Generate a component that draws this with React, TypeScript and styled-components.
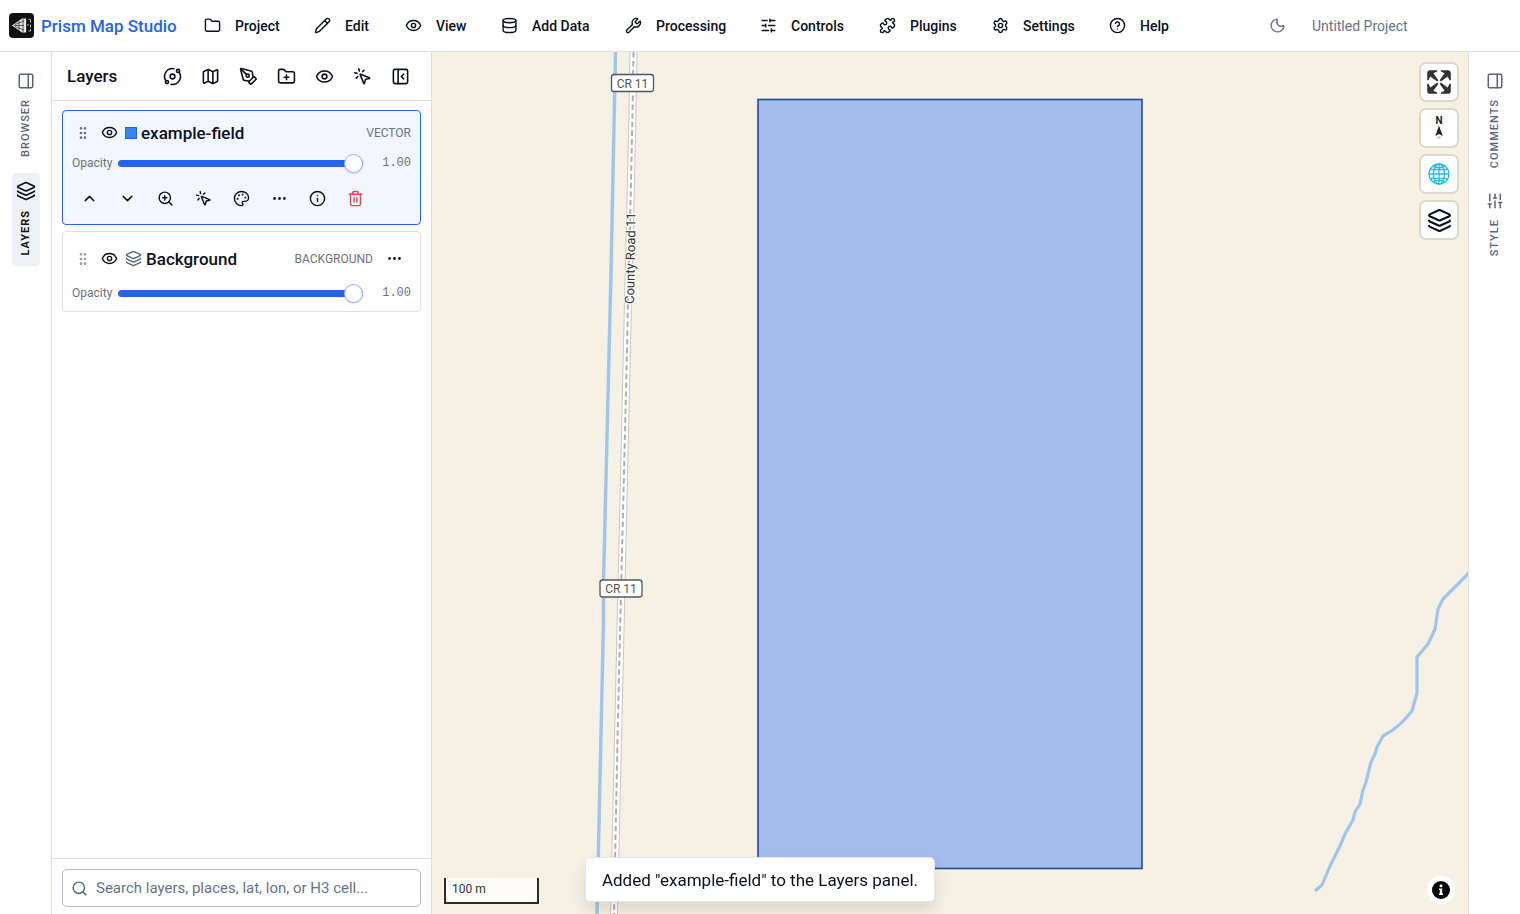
import React from 'react';
import styled, { createGlobalStyle, css } from 'styled-components';
import {
  Folder, Pencil, Eye, Database, Wrench, SlidersHorizontal, Puzzle, Settings, CircleHelp, Moon,
  Orbit, Map as MapIcon, PenTool, FolderPlus, MousePointerClick, PanelLeftClose, PanelRight,
  Layers, GripVertical, ChevronUp, ChevronDown, ZoomIn, Palette, Ellipsis, Info, Trash2, Search,
  type LucideIcon,
} from 'lucide-react';

const Global = createGlobalStyle`
  *, *::before, *::after { box-sizing: border-box; }
  html, body, #root { height: 100%; }
  body { margin: 0; background: #fff; color: #0b1020; font-family: Roboto, "Open Sans", sans-serif; }
  button, input { font: inherit; color: inherit; }
  button { border: 0; padding: 0; background: none; cursor: pointer; }
  svg { display: block; flex: none; }
`;

const Shell = styled.div`
  display: flex;
  flex-direction: column;
  height: 100vh;
  overflow: hidden;
`;

const Header = styled.header`
  display: flex;
  align-items: center;
  flex: none;
  height: 52px;
  padding-left: 9px;
  border-bottom: 1px solid #dcdfe5;
`;

const Brand = styled.a`
  display: flex;
  align-items: center;
  gap: 7px;
  width: 195px;
  color: #2563eb;
  font-size: 17px;
  font-weight: 500;
  line-height: 24px;
  text-decoration: none;
  white-space: nowrap;
`;

const Menu = styled.nav`
  display: grid;
  grid-template-columns: 110px 91px 96px 124px 135px 119px 113px 117px 101px;
`;

const MenuButton = styled.button`
  display: flex;
  align-items: center;
  gap: 14px;
  height: 32px;
  font-size: 14px;
  font-weight: 500;
  white-space: nowrap;
`;

const HeaderEnd = styled.div`
  display: flex;
  align-items: center;
  gap: 26px;
  margin-left: 59px;
  color: #697386;
  font-size: 14px;
  white-space: nowrap;
`;

const Body = styled.div`
  display: flex;
  flex: 1;
  min-height: 0;
`;

const Rail = styled.nav<{ $side: 'left' | 'right' }>`
  display: flex;
  flex-direction: column;
  align-items: center;
  gap: 8px;
  flex: none;
  width: 52px;
  padding-top: 12px;
  ${p => p.$side === 'left' ? css`border-right: 1px solid #dcdfe5;` : css`border-left: 1px solid #dcdfe5;`}
`;

const RailTab = styled.button<{ $active?: boolean; $height: number }>`
  display: flex;
  flex-direction: column;
  align-items: center;
  gap: 9px;
  width: 28px;
  height: ${p => p.$height}px;
  padding-top: 8px;
  border-radius: 4px;
  background: ${p => p.$active ? '#eff1f5' : 'transparent'};
  color: ${p => p.$active ? '#0b1020' : '#5b6478'};
  font-size: 11px;
  font-weight: ${p => p.$active ? 700 : 500};
  line-height: 16px;
  letter-spacing: 1px;
`;

const RailLabel = styled.span`
  writing-mode: vertical-rl;
  transform: rotate(180deg);
`;

const RotatedIcon = styled.span`
  transform: rotate(90deg);
`;

const Panel = styled.aside`
  display: flex;
  flex-direction: column;
  flex: none;
  width: 380px;
  border-right: 1px solid #dcdfe5;
`;

const PanelHeader = styled.div`
  display: flex;
  align-items: center;
  justify-content: space-between;
  height: 49px;
  padding: 0 12px 0 15px;
  border-bottom: 1px solid #dcdfe5;
`;

const PanelTitle = styled.h2`
  margin: 0;
  font-size: 17px;
  font-weight: 500;
  line-height: 24px;
`;

const IconRow = styled.div`
  display: flex;
`;

const IconButton = styled.button<{ $danger?: boolean }>`
  display: grid;
  place-items: center;
  width: 38px;
  height: 36px;
  color: ${p => p.$danger ? '#e5484d' : 'inherit'};
`;

const LayerTools = styled(IconRow)`
  margin-left: -2px;
`;

const LayerList = styled.ul`
  flex: 1;
  display: flex;
  flex-direction: column;
  gap: 6px;
  margin: 0;
  padding: 9px 10px;
  list-style: none;
`;

const LayerCard = styled.li<{ $selected?: boolean }>`
  display: flex;
  flex-direction: column;
  padding: ${p => p.$selected ? '8px 9px' : '9px 9px 1px'};
  border: 1px solid ${p => p.$selected ? '#2563eb' : '#dcdfe5'};
  border-radius: 4px;
  background: ${p => p.$selected ? '#f2f6fe' : '#fff'};
`;

const LayerHead = styled.div<{ $tall?: boolean }>`
  display: flex;
  align-items: center;
  height: ${p => p.$tall ? 35 : 27}px;
  padding-left: 3px;
`;

const Grip = styled.span<{ $dim?: boolean }>`
  display: flex;
  width: 26px;
  color: #6b7280;
  opacity: ${p => p.$dim ? 0.7 : 1};
`;

const EyeButton = styled.button`
  display: flex;
  width: 24px;
`;

const Swatch = styled.span`
  width: 12px;
  height: 12px;
  margin-right: 4px;
  border: 1px solid #2563eb;
  background: #3b82f6;
`;

const LayerGlyph = styled.span`
  margin-right: 4px;
  color: #5b6478;
`;

const LayerName = styled.span`
  flex: 1;
  font-size: 17px;
  font-weight: 500;
  line-height: 24px;
`;

const LayerKind = styled.span`
  color: #6b7280;
  font-size: 12px;
  line-height: 16px;
`;

const MoreButton = styled.button`
  display: grid;
  place-items: center;
  width: 38px;
  height: 28px;
  padding-left: 4px;
`;

const OpacityRow = styled.label`
  display: flex;
  align-items: center;
  height: 34px;
  color: #6b7280;
  font-size: 12px;
  line-height: 16px;
`;

const OpacityText = styled.span`
  width: 46px;
`;

const Range = styled.input`
  flex: 1;
  appearance: none;
  height: 20px;
  margin: 0;
  background: transparent;
  &::-webkit-slider-runnable-track {
    height: 7px;
    border-radius: 4px;
    background: #2563eb;
  }
  &::-webkit-slider-thumb {
    appearance: none;
    width: 19px;
    height: 19px;
    margin-top: -6px;
    border: 1px solid #92aef4;
    border-radius: 50%;
    background: #fff;
    box-shadow: 0 1px 2px rgba(20, 40, 90, 0.15);
  }
`;

const OpacityValue = styled.output`
  width: 48px;
  font-family: "Liberation Mono", monospace;
  font-size: 12px;
  text-align: right;
`;

const SearchBar = styled.div`
  flex: none;
  padding: 10px 10px 7px;
  border-top: 1px solid #dcdfe5;
`;

const SearchField = styled.label`
  display: flex;
  align-items: center;
  gap: 8px;
  height: 38px;
  padding: 0 9px 0 8px;
  border: 1px solid #b6bbc7;
  border-radius: 5px;
  color: #5b6478;
`;

const SearchInput = styled.input`
  flex: 1;
  min-width: 0;
  border: 0;
  padding: 0;
  outline: 0;
  background: transparent;
  font-size: 15px;
  &::placeholder { color: #697386; opacity: 1; }
`;

const MapArea = styled.main`
  position: relative;
  flex: 1;
  min-width: 0;
  overflow: hidden;
  background: #f5f1e4;
`;

const MapDrawing = styled.svg`
  position: absolute;
  top: 0;
  left: 0;
`;

const MapControls = styled.div`
  position: absolute;
  top: 12px;
  right: 11px;
  display: flex;
  flex-direction: column;
  gap: 10px;
`;

const MapControl = styled.button`
  display: grid;
  place-items: center;
  width: 36px;
  height: 36px;
  border-radius: 5px;
  background: #fff;
  box-shadow: 0 0 0 2px rgba(0, 0, 0, 0.1);
`;

const Scale = styled.div`
  position: absolute;
  left: 12px;
  bottom: 10px;
  width: 95px;
  height: 26px;
  padding: 0 6px;
  border: 2px solid #2b2b2b;
  border-top: 0;
  background: rgba(255, 255, 255, 0.75);
  color: #333;
  font-size: 12px;
  line-height: 22px;
`;

const Attribution = styled.button`
  position: absolute;
  right: 13px;
  bottom: 10px;
  display: grid;
  place-items: center;
  width: 28px;
  height: 28px;
  border-radius: 50%;
  background: #fff;
`;

const Toast = styled.div`
  position: fixed;
  left: 50%;
  bottom: 12px;
  transform: translateX(-50%);
  padding: 10px 16px 9px;
  border: 1px solid #e2e5ea;
  border-radius: 5px;
  background: #fff;
  box-shadow: 0 8px 14px rgba(30, 30, 20, 0.12);
  font-size: 17px;
  line-height: 24px;
  white-space: nowrap;
`;

const menu: [string, LucideIcon][] = [
  ['Project', Folder], ['Edit', Pencil], ['View', Eye], ['Add Data', Database], ['Processing', Wrench],
  ['Controls', SlidersHorizontal], ['Plugins', Puzzle], ['Settings', Settings], ['Help', CircleHelp],
];

const panelTools: [string, LucideIcon][] = [
  ['Orbit', Orbit], ['Basemap', MapIcon], ['Draw', PenTool], ['New group', FolderPlus],
  ['Toggle visibility', Eye], ['Identify', MousePointerClick], ['Collapse panel', PanelLeftClose],
];

const layerTools: [string, LucideIcon][] = [
  ['Move up', ChevronUp], ['Move down', ChevronDown], ['Zoom to layer', ZoomIn], ['Identify', MousePointerClick],
  ['Style', Palette], ['More', Ellipsis], ['Info', Info],
];

function Logo() {
  return (
    <svg width="25" height="25" viewBox="0 0 25 25" fill="none">
      <rect width="25" height="25" rx="4" fill="#111" />
      <path d="M3 12.500 13 5.500h3v14h-3z" fill="#e4e4e4" />
      <path d="M6 11.500 15 8M6 13.500 15 17M5 12.500h10M10 8v9M14 6v13" stroke="#222" strokeWidth=".7" />
      <path d="M16.500 5.500v14" stroke="#f2f2f2" strokeWidth="1.200" />
      <path d="M19.500 6.500h2v3M21.500 11.500v3M19.500 18h2v-2M19 11v2" stroke="#bbb" strokeWidth="1" />
    </svg>
  );
}

function Shield({ x, y }: { x: number; y: number }) {
  return (
    <g>
      <rect x={x} y={y} width="42" height="17" rx="2.5" fill="#fff" stroke="#55555c" strokeWidth="1.3" />
      <text x={x + 21} y={y + 13} textAnchor="middle" fontFamily="Roboto, sans-serif" fontSize="12" fill="#555">CR 11</text>
    </g>
  );
}

function MapCanvas() {
  const road = 'M201.500 0C200 110 197 200 196 250C193 400 187 590 182 862';
  return (
    <MapDrawing width="1037" height="862" viewBox="0 0 1037 862" fill="none">
      <path d="M183.500 0 179 220 171.500 530V570L165 862" stroke="#9fc5ec" strokeWidth="3.400" />
      <path d={road} stroke="#c9c7c9" strokeWidth="8" />
      <path d={road} stroke="#fff" strokeWidth="6" />
      <path d={road} stroke="#b0adb3" strokeWidth="2" strokeDasharray="5.500 3.200" />
      <path d="M1037 521 1011 547 1006 557 1003 577 996 592 985 605V641L980 659C970 671 964 677 951 684L945 695 943 702 939 710 934 730 931 738 928 752 923 760 921 768 914 780 907 796 898 814 890 833 883 839" stroke="#9fc5ec" strokeWidth="3.200" strokeLinejoin="round" />
      <rect x="326" y="47.500" width="384" height="769" fill="#a3bceb" stroke="#234a97" strokeWidth="1.600" />
      <Shield x={179.5} y={22.5} />
      <Shield x={168} y={528} />
      <text transform="translate(202 252) rotate(-89)" fontFamily="Roboto, sans-serif" fontSize="13" fill="#333" stroke="#fff" strokeWidth="2" paintOrder="stroke">County Road 11</text>
    </MapDrawing>
  );
}

function FullscreenGlyph() {
  return (
    <svg width="36" height="36" viewBox="0 0 29 29" fill="#333">
      <path d="M24 16v5.500c0 1.750-.75 2.500-2.500 2.500H16v-1l3-1.500-4-5.500 1-1 5.500 4 1.500-3zM6 16l1.500 3 5.500-4 1 1-4 5.500 3 1.500v1H7.500C5.750 24 5 23.250 5 21.500V16zm7-11v1l-3 1.500 4 5.500-1 1-5.500-4L6 13H5V7.500C5 5.750 5.750 5 7.500 5zm11 2.500c0-1.750-.75-2.500-2.500-2.500H16v1l3 1.500-4 5.500 1 1 5.500-4 1.500 3h1z" />
    </svg>
  );
}

function CompassGlyph() {
  return (
    <svg width="36" height="36" viewBox="0 0 36 36">
      <text x="18" y="14" textAnchor="middle" fontFamily="Roboto, sans-serif" fontSize="10" fontWeight="700" fill="#222">N</text>
      <path d="M18 15.500l3.700 10.500-3.700-2-3.700 2z" fill="#222" />
      <path d="M15.500 27l2.500-1 2.500 1-2.500 2.500z" fill="#ccc" />
    </svg>
  );
}

function GlobeGlyph() {
  return (
    <svg width="22" height="22" viewBox="0 0 22 22" fill="none" stroke="#33b5e5" strokeWidth="1.300">
      <circle cx="11" cy="11" r="10" />
      <ellipse cx="11" cy="11" rx="5.500" ry="10" />
      <path d="M11 1v20M1 11h20M2.500 6.500h17M2.500 15.500h17M5 3.500c4 1.500 8 1.500 12 0M5 18.500c4-1.500 8-1.500 12 0" />
    </svg>
  );
}

function Opacity() {
  return (
    <OpacityRow>
      <OpacityText>Opacity</OpacityText>
      <Range type="range" min="0" max="1" step="0.01" defaultValue="1" />
      <OpacityValue>1.00</OpacityValue>
    </OpacityRow>
  );
}

export default function App() {
  return (
    <Shell>
      <Global />
      <Header>
        <Brand href="#"><Logo />Prism Map Studio</Brand>
        <Menu>
          {menu.map(([label, Icon]) => <MenuButton key={label}><Icon size={17} />{label}</MenuButton>)}
        </Menu>
        <HeaderEnd>
          <button aria-label="Dark mode"><Moon size={17} /></button>
          <span>Untitled Project</span>
        </HeaderEnd>
      </Header>
      <Body>
        <Rail $side="left">
          <RailTab $height={101}><PanelRight size={18} /><RailLabel>BROWSER</RailLabel></RailTab>
          <RailTab $active $height={93}><Layers size={20} /><RailLabel>LAYERS</RailLabel></RailTab>
        </Rail>
        <Panel>
          <PanelHeader>
            <PanelTitle>Layers</PanelTitle>
            <IconRow>
              {panelTools.map(([label, Icon]) => <IconButton key={label} aria-label={label}><Icon size={19} /></IconButton>)}
            </IconRow>
          </PanelHeader>
          <LayerList>
            <LayerCard $selected>
              <LayerHead>
                <Grip><GripVertical size={16} /></Grip>
                <EyeButton aria-label="Hide layer"><Eye size={17} /></EyeButton>
                <Swatch />
                <LayerName>example-field</LayerName>
                <LayerKind>VECTOR</LayerKind>
              </LayerHead>
              <Opacity />
              <LayerTools>
                {layerTools.map(([label, Icon]) => <IconButton key={label} aria-label={label}><Icon size={17} /></IconButton>)}
                <IconButton $danger aria-label="Delete layer"><Trash2 size={17} /></IconButton>
              </LayerTools>
            </LayerCard>
            <LayerCard>
              <LayerHead $tall>
                <Grip $dim><GripVertical size={16} /></Grip>
                <EyeButton aria-label="Hide layer"><Eye size={17} /></EyeButton>
                <LayerGlyph><Layers size={17} /></LayerGlyph>
                <LayerName>Background</LayerName>
                <LayerKind>BACKGROUND</LayerKind>
                <MoreButton aria-label="More"><Ellipsis size={17} /></MoreButton>
              </LayerHead>
              <Opacity />
            </LayerCard>
          </LayerList>
          <SearchBar>
            <SearchField>
              <Search size={17} />
              <SearchInput aria-label="Search" placeholder="Search layers, places, lat, lon, or H3 cell..." />
            </SearchField>
          </SearchBar>
        </Panel>
        <MapArea>
          <MapCanvas />
          <MapControls>
            <MapControl aria-label="Fullscreen"><FullscreenGlyph /></MapControl>
            <MapControl aria-label="Reset north"><CompassGlyph /></MapControl>
            <MapControl aria-label="Globe"><GlobeGlyph /></MapControl>
            <MapControl aria-label="Layers"><Layers size={25} /></MapControl>
          </MapControls>
          <Scale>100 m</Scale>
          <Attribution aria-label="Attribution">
            <svg width="18" height="18" viewBox="0 0 18 18">
              <circle cx="9" cy="9" r="9" />
              <path d="M9 3.200a1.500 1.500 0 1 1 0 3 1.500 1.500 0 0 1 0-3M7 7.500h3.200v5H11V14H7v-1.500h.8V9H7z" fill="#fff" />
            </svg>
          </Attribution>
        </MapArea>
        <Rail $side="right">
          <RailTab $height={112}><PanelRight size={18} /><RailLabel>COMMENTS</RailLabel></RailTab>
          <RailTab $height={93}><RotatedIcon><SlidersHorizontal size={18} /></RotatedIcon><RailLabel>STYLE</RailLabel></RailTab>
        </Rail>
      </Body>
      <Toast role="status">Added "example-field" to the Layers panel.</Toast>
    </Shell>
  );
}
